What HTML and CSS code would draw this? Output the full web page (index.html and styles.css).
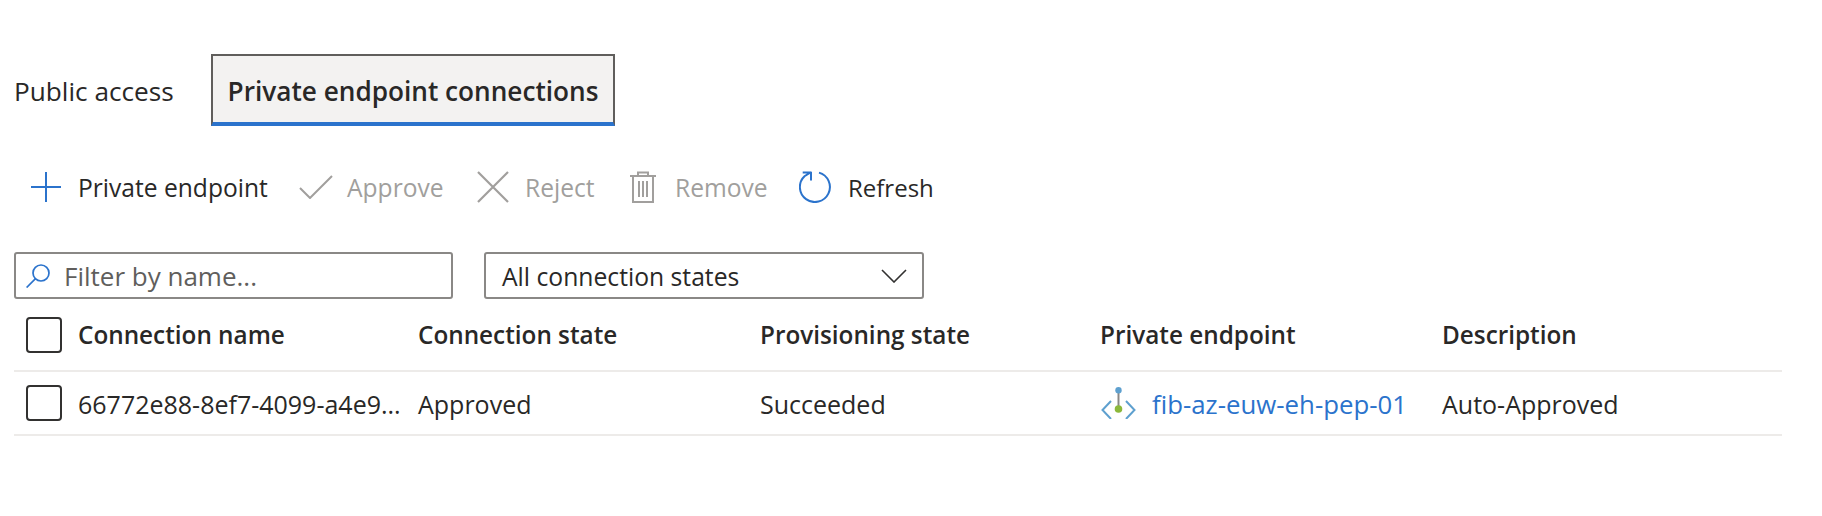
FILE: index.html
```html
<!DOCTYPE html>
<html lang="en">
<head>
<meta charset="utf-8">
<title>Private endpoint connections</title>
<link rel="stylesheet" href="styles.css">
</head>
<body>
<main class="page">
  <div class="tabs">
    <div class="tab">Public access</div>
    <div class="tab tab-active">Private endpoint connections</div>
  </div>
  <div class="toolbar">
    <div class="cmd cmd-add">
      <svg class="icon-add" viewBox="0 0 30 30" width="30" height="30"><path d="M15 0V30M0 15H30" fill="none" stroke="#2b73cc" stroke-width="2"/></svg>
      <span>Private endpoint</span>
    </div>
    <div class="cmd cmd-approve off">
      <svg viewBox="0 0 34 24" width="34" height="24"><path d="M1 13L11 23L33 1" fill="none" stroke="#a19f9d" stroke-width="2"/></svg>
      <span>Approve</span>
    </div>
    <div class="cmd cmd-reject off">
      <svg viewBox="0 0 34 34" width="34" height="34"><path d="M2 2L32 32M32 2L2 32" fill="none" stroke="#a19f9d" stroke-width="2.2"/></svg>
      <span>Reject</span>
    </div>
    <div class="cmd cmd-remove off">
      <svg viewBox="0 0 26 32" width="26" height="32"><path d="M0 5H26M8 5V1.5H18V5M3 5V31H23V5M9 10V26M13 10V26M17 10V26" fill="none" stroke="#a19f9d" stroke-width="2"/></svg>
      <span>Remove</span>
    </div>
    <div class="cmd cmd-refresh">
      <svg viewBox="0 0 32 32" width="32" height="32"><path d="M20 1.6A15 15 0 1 1 5.5 5.2L12 1.2M3.7 1.6H12.6M12 1V9.5" fill="none" stroke="#2b73cc" stroke-width="2"/></svg>
      <span>Refresh</span>
    </div>
  </div>
  <div class="filters">
    <div class="field field-search">
      <svg viewBox="0 0 24 24" width="24" height="24"><circle cx="15" cy="9" r="8" fill="none" stroke="#2b73cc" stroke-width="1.7"/><path d="M9.5 14.7L0.6 23.5" fill="none" stroke="#2b73cc" stroke-width="1.7"/></svg>
      <span class="placeholder">Filter by name...</span>
    </div>
    <div class="field field-select">
      <span>All connection states</span>
      <svg viewBox="0 0 26 14" width="26" height="14"><path d="M1 1L13 13L25 1" fill="none" stroke="#323130" stroke-width="1.6"/></svg>
    </div>
  </div>
  <div class="table">
    <div class="row row-head">
      <div class="cell"><span class="check"></span></div>
      <div class="cell">Connection name</div>
      <div class="cell">Connection state</div>
      <div class="cell">Provisioning state</div>
      <div class="cell">Private endpoint</div>
      <div class="cell">Description</div>
    </div>
    <div class="row">
      <div class="cell"><span class="check"></span></div>
      <div class="cell cell-text">66772e88-8ef7-4099-a4e9...</div>
      <div class="cell cell-text">Approved</div>
      <div class="cell cell-text">Succeeded</div>
      <div class="cell cell-link">
        <svg viewBox="0 0 35 32" width="35" height="32">
          <path d="M10 14L1.5 23L10 32M25 14L33.5 23L25 32" fill="none" stroke="#5ea0cf" stroke-width="2"/>
          <path d="M17.5 3V22" fill="none" stroke="#8a8886" stroke-width="2"/>
          <circle cx="17.5" cy="3.2" r="3.2" fill="#5ea0cf"/>
          <circle cx="17.5" cy="22" r="3.8" fill="#8cb83a"/>
        </svg>
        <a class="link" href="#">fib-az-euw-eh-pep-01</a>
      </div>
      <div class="cell cell-text">Auto-Approved</div>
    </div>
  </div>
</main>
</body>
</html>
```

FILE: styles.css
```css
* { box-sizing: border-box; }
html, body { margin: 0; background: #fff; }
body {
  font-family: "Open Sans", "Noto Sans", "Liberation Sans", sans-serif;
  font-size: 25px;
  color: #292827;
  height: 516px;
  overflow: hidden;
}
.page { padding: 54px 40px 0 14px; }

.tabs { display: flex; align-items: stretch; height: 72px; }
.tab { display: flex; align-items: center; font-size: 26.2px; padding-top: 2px; }
.tab:first-child { width: 197px; }
.tab-active {
  width: 404px;
  justify-content: center;
  font-weight: 600;
  background: #f3f2f1;
  border: 2px solid #605e5c;
  border-bottom: 4px solid #2b73cc;
  padding-top: 3px;
}

.toolbar { display: flex; align-items: center; height: 68px; margin-top: 27px; font-size: 24.6px; }
.cmd { display: flex; align-items: center; }
.off { color: #a19f9d; }
.cmd-add { margin-left: 17px; width: 268px; gap: 17px; }
.cmd-approve { width: 177px; gap: 14px; }
.cmd-reject { width: 154px; gap: 15px; }
.cmd-remove { width: 169px; gap: 19px; }
.cmd-refresh { gap: 17px; font-size: 24px; }

.filters { display: flex; gap: 31px; margin-top: 31px; }
.field {
  display: flex;
  align-items: center;
  height: 47px;
  width: 439px;
  border: 2px solid #8a8886;
  border-radius: 3px;
}
.field-search { padding-left: 10px; gap: 14px; }
.placeholder { color: #605e5c; font-size: 26px; }
.field-select { width: 440px; padding: 1px 15px 0 16px; justify-content: space-between; font-size: 24.7px; }

.row {
  display: grid;
  grid-template-columns: 64px 340px 342px 340px 342px 1fr;
  align-items: center;
  height: 64px;
  border-bottom: 2px solid #edebe9;
}
.row-head { height: 73px; font-size: 24.3px; font-weight: 600; }
.cell { display: flex; align-items: center; white-space: nowrap; }
.cell-text { padding-top: 2px; }
.check {
  display: block;
  width: 36px;
  height: 36px;
  margin-left: 12px;
  border: 2px solid #323130;
  border-radius: 4px;
}
.cell-link { gap: 16px; padding-left: 1px; }
.link { color: #2b73cc; text-decoration: none; font-size: 25.8px; padding-top: 2px; }
```
